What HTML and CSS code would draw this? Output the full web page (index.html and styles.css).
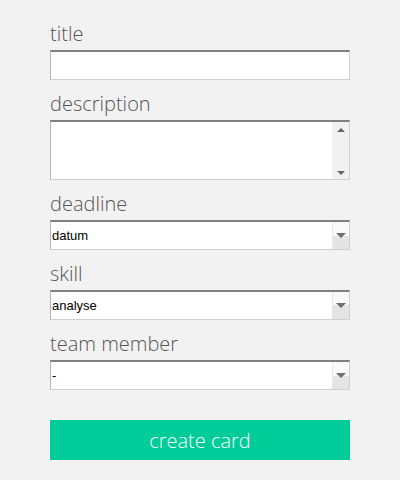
FILE: index.html
```html
<!DOCTYPE html>
<html>
<head>
<meta charset="utf-8">
<link rel="stylesheet" href="styles.css">
</head>
<body>
<form class="card-form">
  <label class="field-label" for="title">title</label>
  <input class="field-input" id="title" type="text">

  <label class="field-label" for="desc">description</label>
  <div class="field-input area-wrap">
    <textarea class="area" id="desc"></textarea>
    <div class="scrollbar">
      <span class="tri tri-up"></span>
      <span class="tri tri-down"></span>
    </div>
  </div>

  <label class="field-label">deadline</label>
  <div class="field-input select-wrap">
    <span class="select-value">datum</span>
    <span class="select-btn"><span class="tri tri-down"></span></span>
  </div>

  <label class="field-label">skill</label>
  <div class="field-input select-wrap">
    <span class="select-value">analyse</span>
    <span class="select-btn"><span class="tri tri-down"></span></span>
  </div>

  <label class="field-label">team member</label>
  <div class="field-input select-wrap">
    <span class="select-value">-</span>
    <span class="select-btn"><span class="tri tri-down"></span></span>
  </div>

  <button class="submit" type="button">create card</button>
</form>
</body>
</html>
```
FILE: styles.css
```css
html, body {
  margin: 0;
  padding: 0;
  background: #f2f2f2;
}
body {
  width: 400px;
  height: 480px;
  font-family: "Open Sans", "Liberation Sans", sans-serif;
}
.card-form {
  display: flex;
  flex-direction: column;
  width: 300px;
  margin: 0 auto;
  padding-top: 20px;
}
.field-label {
  display: block;
  height: 30px;
  line-height: 28px;
  font-size: 20px;
  font-weight: 300;
  color: #555;
}
.field-input {
  box-sizing: border-box;
  height: 30px;
  width: 300px;
  margin: 0 0 10px 0;
  padding: 0;
  background: #fff;
  border-style: solid;
  border-width: 2px 1px 1px 1px;
  border-color: #7f7f7f #d0d0d0 #d0d0d0 #b4b4b4;
  outline: none;
}
.area-wrap {
  height: 60px;
  display: flex;
}
.area {
  flex: 1;
  border: 0;
  resize: none;
  outline: none;
  background: #fff;
  margin: 0;
}
.scrollbar {
  width: 17px;
  background: #f1f1f1;
  display: flex;
  flex-direction: column;
  justify-content: space-between;
  align-items: center;
  padding: 6px 0 4px;
}
.tri {
  width: 0;
  height: 0;
  border-left: 4px solid transparent;
  border-right: 4px solid transparent;
}
.tri-up {
  border-bottom: 4px solid #666;
}
.tri-down {
  border-top: 4px solid #666;
}
.select-wrap {
  display: flex;
  align-items: center;
}
.select-value {
  flex: 1;
  font-family: "Liberation Sans", Arial, sans-serif;
  font-size: 13px;
  color: #000;
  padding-left: 1px;
}
.select-btn {
  align-self: stretch;
  width: 16px;
  display: flex;
  align-items: center;
  justify-content: center;
  background: linear-gradient(#f9f9f9 0%, #f9f9f9 50%, #e4e4e4 50%, #e4e4e4 100%);
  border-left: 1px solid #e8e8e8;
}
.select-btn .tri-down {
  border-left-width: 5px;
  border-right-width: 5px;
  border-top-width: 5px;
  border-top-color: #6f6f6f;
}
.submit {
  margin-top: 20px;
  height: 40px;
  width: 300px;
  border: 0;
  background: #00cc99;
  color: #fff;
  font-family: "Open Sans", "Liberation Sans", sans-serif;
  font-weight: 300;
  font-size: 20px;
  padding: 0;
}
```
